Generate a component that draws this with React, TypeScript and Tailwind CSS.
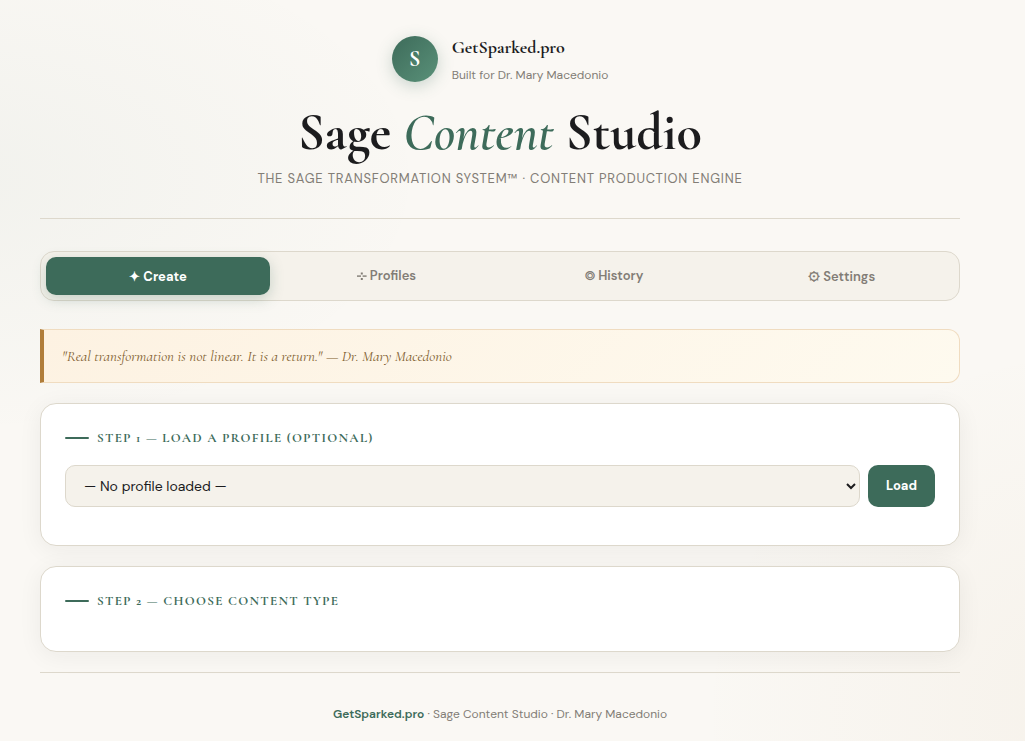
import React from "react";

const serif = "font-['Cormorant_Garamond','Liberation_Serif',serif]";
const sans = "font-['DM_Sans',sans-serif]";

function ProfilesIcon() {
  return (
    <svg width="10" height="10" viewBox="0 0 10 10" className="mr-[3px] ml-px inline-block align-[-1px]" fill="currentColor" aria-hidden="true">
      <rect x="0" y="4.4" width="4" height="1.4" />
      <rect x="5.6" y="4.4" width="4" height="1.4" />
      <rect x="3.8" y="1.5" width="2" height="2" />
      <rect x="3.8" y="7" width="2" height="2" />
    </svg>
  );
}

const tabs = [
  { icon: "✦ ", label: "Create", look: "pt-[2px] pb-0 font-['DM_Sans','Noto_Sans_Symbols',sans-serif]" },
  { icon: <ProfilesIcon />, label: "Profiles", look: "" },
  { icon: "◎ ", label: "History", look: "font-['DM_Sans','FreeSans',sans-serif]" },
  { icon: "⚙ ", label: "Settings", look: "pt-[2px] pb-0 pr-px font-['DM_Sans','Noto_Sans_Symbols',sans-serif]" },
];

function StepTitle({ children }: { children: React.ReactNode }) {
  return (
    <h2 className={`${serif} flex h-4 items-center gap-2 text-[13px] leading-4 font-bold tracking-[1.3px] whitespace-nowrap text-[#3d6b5a] uppercase`}>
      <span className="h-[2px] w-6 rounded-full bg-[#3d6b5a]" />
      <span>{children}</span>
    </h2>
  );
}

const card =
  "rounded-2xl border border-[#ddd8cc] bg-white px-6 shadow-[0_4px_24px_rgba(28,28,30,0.06)]";

export default function App() {
  return (
    <div
      className={`${sans} h-[741px] w-full overflow-hidden bg-[#faf8f4] bg-[radial-gradient(ellipse_46%_35%_at_-4%_24%,rgba(61,107,90,0.045),transparent),radial-gradient(ellipse_40%_50%_at_108%_96%,rgba(176,125,58,0.05),transparent)] text-[#1c1c1e]`}
    >
      <div className="w-[1000px] px-10 pt-9">
        <header className="flex h-[183px] flex-col items-center border-b border-[#ddd8cc]">
          <div className="flex h-[46px] items-center gap-[14px]">
            <div
              className={`${serif} flex size-[46px] items-center justify-center rounded-full bg-linear-135 from-[#3d6b5a] to-[#5a9179] text-[22px] font-bold text-white shadow-[0_4px_16px_rgba(61,107,90,0.25)]`}
            >
              S
            </div>
            <div className="whitespace-nowrap">
              <div className={`${serif} h-[28px] text-[18px] leading-[25px] font-bold`}>GetSparked.pro</div>
              <div className="h-[20px] text-[12px] leading-[24px] text-[#827d76]">Built for Dr. Mary Macedonio</div>
            </div>
          </div>
          <h1 className={`${serif} mt-[21px] h-[60px] text-[52px] leading-[60px] font-bold whitespace-nowrap`}>
            Sage <em className="font-semibold text-[#3d6b5a]">Content</em> Studio
          </h1>
          <p className="mt-[6px] text-[13px] leading-5 tracking-[0.78px] whitespace-nowrap text-[#827d76]">
            THE SAGE TRANSFORMATION SYSTEM™ · CONTENT PRODUCTION ENGINE
          </p>
        </header>

        <nav className="mt-8 grid h-[50px] grid-cols-4 gap-1 rounded-[14px] border border-[#ddd8cc] bg-[#f5f2eb] p-[5px]">
          {tabs.map((tab, i) => (
            <button
              key={tab.label}
              className={`${tab.look} h-[38px] rounded-[10px] text-[13px] whitespace-nowrap ${
                i === 0
                  ? "bg-[#3d6b5a] font-bold text-white shadow-[0_4px_14px_rgba(61,107,90,0.25)]"
                  : "font-semibold text-[#827d76]"
              }`}
            >
              {tab.icon}
              {tab.label}
            </button>
          ))}
        </nav>

        <blockquote
          className={`${serif} mt-7 flex h-[54px] items-center rounded-r-xl border border-l-4 border-[#f0dcc0] border-l-[#b07d3a] bg-linear-135 from-[#fdf2e2] to-[#fefaef] pl-[18px] text-[15px] whitespace-nowrap text-[#7d5c2c] italic`}
        >
          "Real transformation is not linear. It is a return." — Dr. Mary Macedonio
        </blockquote>

        <section className={`${card} mt-5 h-[143px] pt-[26px]`}>
          <StepTitle>Step 1 — Load a Profile (optional)</StepTitle>
          <div className="mt-[19px] flex gap-2">
            <select className="h-[42px] w-[795px] rounded-[10px] border border-[#ddd8cc] bg-[#f5f2eb] pl-[14px] text-[14px] text-[#1c1c1e]">
              <option>— No profile loaded —</option>
            </select>
            <button className="h-[42px] w-[67px] rounded-[10px] bg-[#3d6b5a] text-[13px] font-bold text-white">Load</button>
          </div>
        </section>

        <section className={`${card} mt-5 h-[86px] pt-[26px]`}>
          <StepTitle>Step 2 — Choose Content Type</StepTitle>
        </section>

        <footer className="mt-5 border-t border-[#ddd8cc] pt-[31px] text-center text-[12px] leading-5 text-[#827d76]">
          <strong className="font-semibold text-[#3d6b5a]">GetSparked.pro</strong> · Sage Content Studio · Dr. Mary Macedonio
        </footer>
      </div>
    </div>
  );
}
